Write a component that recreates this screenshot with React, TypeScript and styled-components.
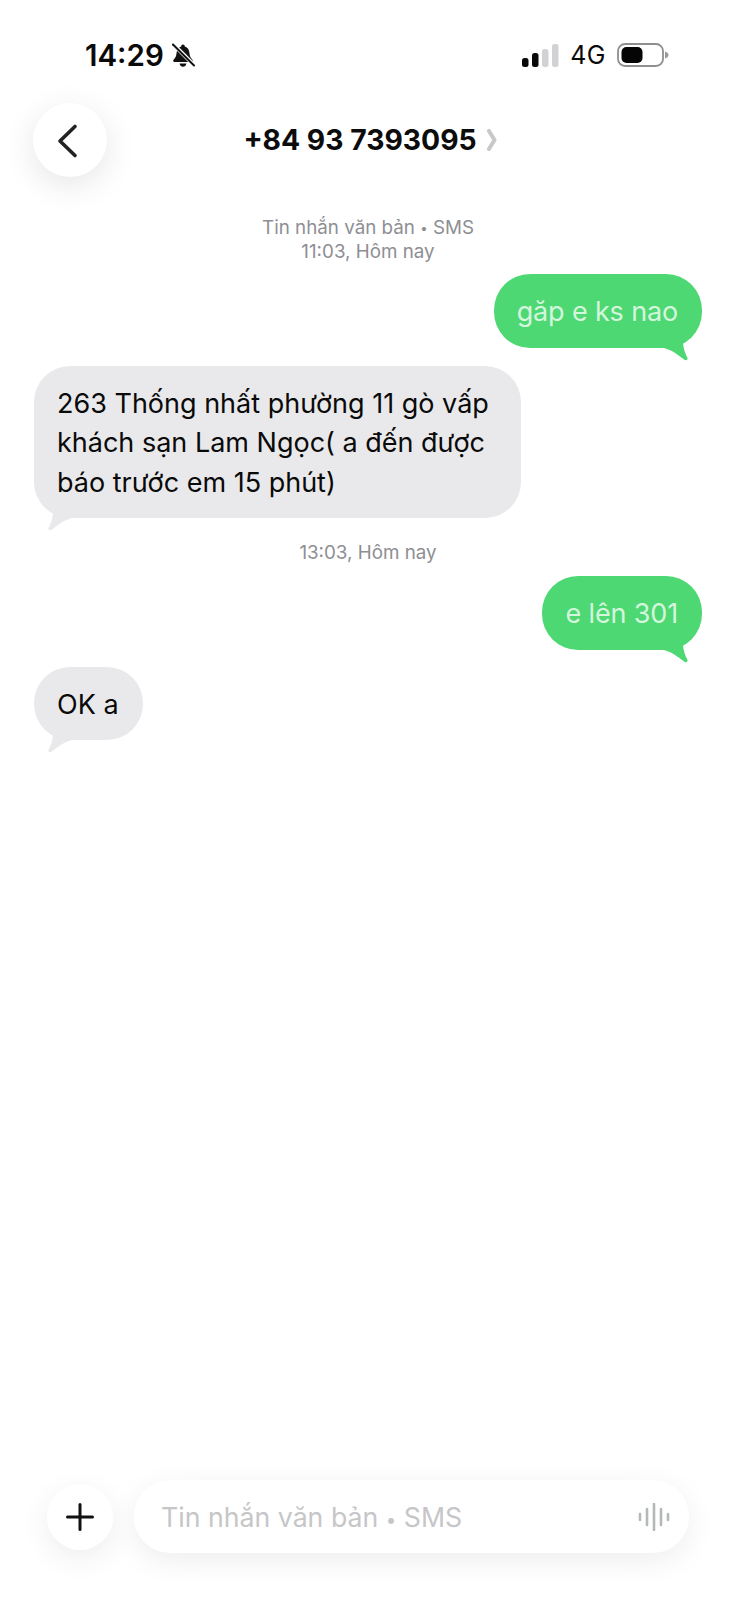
import React from 'react'
import styled, { createGlobalStyle } from 'styled-components'

const GlobalStyle = createGlobalStyle`
  html, body {
    margin: 0;
    padding: 0;
    background: #ffffff;
    font-family: Inter, "Liberation Sans", sans-serif;
  }
`

const App: React.FC = () => {
  return (
    <Page>
      <GlobalStyle />
      <StatusBar>
        <StatusLeft>
          <Clock>14:29</Clock>
          <BellOff />
        </StatusLeft>
        <StatusRight>
          <Signal />
          <Network>4G</Network>
          <Battery />
        </StatusRight>
      </StatusBar>

      <Nav>
        <RoundButton>
          <BackIcon width="26" height="36" viewBox="0 0 26 36">
            <path d="M20 3.5 L5 18 L20 32.5" fill="none" stroke="#222" strokeWidth="3.6" strokeLinecap="round" strokeLinejoin="round" />
          </BackIcon>
        </RoundButton>
        <Title>
          +84 93 7393095
          <svg width="10" height="22" viewBox="0 0 10 22">
            <path d="M2 2 L7.5 11 L2 20" fill="none" stroke="#c8c8ca" strokeWidth="4" strokeLinecap="round" strokeLinejoin="round" />
          </svg>
        </Title>
      </Nav>

      <Thread>
        <TimeLabel $top={39}>
          <div>Tin nhắn văn bản <Dot>•</Dot> SMS</div>
          <div>11:03, Hôm nay</div>
        </TimeLabel>
        <Bubble $sent $top={10}>
          găp e ks nao
          <Tail $sent />
        </Bubble>
        <Bubble $top={18} $minWidth={487}>
          263 Thống nhất phường 11 gò vấp
          <br />
          khách sạn Lam Ngọc( a đến được
          <br />
          báo trước em 15 phút)
          <Tail />
        </Bubble>
        <TimeLabel $top={23}>
          <div>13:03, Hôm nay</div>
        </TimeLabel>
        <Bubble $sent $top={11}>
          e lên 301
          <Tail $sent />
        </Bubble>
        <Bubble $top={17}>
          OK a
          <Tail />
        </Bubble>
      </Thread>

      <Composer>
        <PlusButton>
          <svg width="28" height="28" viewBox="0 0 28 28">
            <path d="M14 1.5 V26.5 M1.5 14 H26.5" stroke="#111" strokeWidth="3" strokeLinecap="round" />
          </svg>
        </PlusButton>
        <InputBox>
          <Placeholder>Tin nhắn văn bản <Dot>•</Dot> SMS</Placeholder>
          <svg width="32" height="28" viewBox="0 0 32 28">
            <path d="M2 11 V17 M9 6 V22 M16 1 V27 M23 6 V22 M30 11 V17" stroke="#b4b8b8" strokeWidth="2.6" strokeLinecap="round" />
          </svg>
        </InputBox>
      </Composer>
    </Page>
  )
}

const BellOff: React.FC = () => (
  <svg width="24" height="25" viewBox="0 0 24 25">
    <path d="M12 1.5 C13.2 1.5 13.8 2.4 13.8 3.4 C17 4.4 18.3 7 18.5 10.5 C18.7 14 20.4 15.5 21.6 17 C22.2 17.9 21.6 19 20.5 19 H3.5 C2.4 19 1.8 17.9 2.4 17 C3.6 15.5 5.3 14 5.5 10.5 C5.7 7 7 4.4 10.2 3.4 C10.2 2.4 10.8 1.5 12 1.5 Z M8.6 20.5 H15.4 C15 22.6 13.7 23.8 12 23.8 C10.3 23.8 9 22.6 8.6 20.5 Z" fill="#111" />
    <path d="M1 0 L24 23" stroke="#fff" strokeWidth="4" />
    <path d="M2 1.5 L23 22.5" stroke="#111" strokeWidth="2" strokeLinecap="round" />
  </svg>
)

const Signal: React.FC = () => (
  <svg width="37" height="23" viewBox="0 0 37 23">
    <rect x="0" y="14" width="6.5" height="9" rx="2.5" fill="#0a0a0a" />
    <rect x="10" y="9" width="6.5" height="14" rx="2.5" fill="#0a0a0a" />
    <rect x="20" y="5" width="6.5" height="18" rx="2.5" fill="#d2d2d4" />
    <rect x="30" y="0" width="6.5" height="23" rx="2.5" fill="#d2d2d4" />
  </svg>
)

const Battery: React.FC = () => (
  <svg width="52" height="24" viewBox="0 0 52 24">
    <rect x="1" y="1" width="45" height="22" rx="7" fill="none" stroke="#8f8f91" strokeWidth="1.8" />
    <rect x="4.5" y="4" width="21" height="16" rx="5" fill="#050505" />
    <path d="M48 8.5 C50.5 9.5 51.5 10.5 51.5 12 C51.5 13.5 50.5 14.5 48 15.5 Z" fill="#9a9a9c" />
  </svg>
)

const Page = styled.div`
  width: 736px;
  height: 1600px;
  display: flex;
  flex-direction: column;
  background: #ffffff;
  overflow: hidden;
`

const StatusBar = styled.div`
  display: flex;
  justify-content: space-between;
  align-items: center;
  height: 24px;
  margin-top: 43px;
  padding: 0 67px 0 85px;
`

const StatusLeft = styled.div`
  display: flex;
  align-items: center;
  gap: 7px;
`

const Clock = styled.span`
  font-size: 29.5px;
  font-weight: 600;
  color: #0a0a0a;
  line-height: 24px;
`

const StatusRight = styled.div`
  display: flex;
  align-items: center;
  gap: 11px;
`

const Network = styled.span`
  font-size: 25px;
  font-weight: 400;
  letter-spacing: 0.5px;
  color: #0a0a0a;
  line-height: 24px;
`

const Nav = styled.div`
  display: grid;
  grid-template-columns: 74px 1fr 74px;
  align-items: center;
  margin-top: 36px;
  padding: 0 33px;
`

const RoundButton = styled.div`
  width: 74px;
  height: 74px;
  border-radius: 50%;
  background: #ffffff;
  box-shadow: 0 8px 32px rgba(0, 0, 0, 0.1);
  display: flex;
  align-items: center;
  justify-content: center;
`

const BackIcon = styled.svg`
  margin: 2px 4px 0 0;
`

const Title = styled.div`
  display: flex;
  align-items: center;
  justify-content: center;
  gap: 10px;
  margin-left: 4px;
  font-size: 28.3px;
  font-weight: 700;
  color: #0c0c0c;
`

const Thread = styled.div`
  display: flex;
  flex-direction: column;
  padding: 0 34px;
`

const TimeLabel = styled.div<{ $top: number }>`
  margin-top: ${props => props.$top}px;
  text-align: center;
  font-size: 18.8px;
  line-height: 24px;
  color: #8e8e93;
`

const Dot = styled.span`
  font-size: 0.7em;
  vertical-align: 0.08em;
`

const Bubble = styled.div<{ $sent?: boolean; $top: number; $minWidth?: number }>`
  position: relative;
  box-sizing: border-box;
  align-self: ${props => (props.$sent ? 'flex-end' : 'flex-start')};
  min-width: ${props => props.$minWidth || 0}px;
  margin-top: ${props => props.$top}px;
  padding: 18px 24px 16px 23px;
  border-radius: 36px;
  font-size: 27px;
  line-height: 39.5px;
  letter-spacing: ${props => (props.$sent ? '-0.15px' : '0')};
  white-space: nowrap;
  background: ${props => (props.$sent ? '#4ed873' : '#e9e9eb')};
  color: ${props => (props.$sent ? '#d4f6dd' : '#0a0a0a')};
`

const TailShape = styled.svg<{ $sent?: boolean }>`
  position: absolute;
  bottom: -13px;
  width: 44px;
  height: 30px;
  ${props => (props.$sent ? 'right: 0;' : 'left: 0; transform: scaleX(-1);')}
`

const Tail: React.FC<{ $sent?: boolean }> = ({ $sent }) => (
  <TailShape $sent={$sent} viewBox="0 0 44 30">
    <path
      d="M4 12 L6 17 C14 19 20 24 26 28.5 C28 30 30 29 29.5 27 C27 22 25 17 25 10 Z"
      fill={$sent ? '#4ed873' : '#e9e9eb'}
    />
  </TailShape>
)

const Composer = styled.div`
  margin-top: auto;
  display: flex;
  align-items: center;
  gap: 21px;
  padding: 0 47px 47px;
`

const PlusButton = styled.div`
  flex: none;
  width: 66px;
  height: 66px;
  border-radius: 50%;
  background: #ffffff;
  box-shadow: 0 8px 30px rgba(0, 0, 0, 0.07);
  display: flex;
  align-items: center;
  justify-content: center;
`

const InputBox = styled.div`
  flex: 1;
  height: 73px;
  border-radius: 36px;
  background: #ffffff;
  box-shadow: 0 8px 30px rgba(0, 0, 0, 0.07);
  display: flex;
  align-items: center;
  justify-content: space-between;
  padding: 0 19px 0 27px;
`

const Placeholder = styled.span`
  font-size: 26.7px;
  color: #c6c6c8;
`

export default App
